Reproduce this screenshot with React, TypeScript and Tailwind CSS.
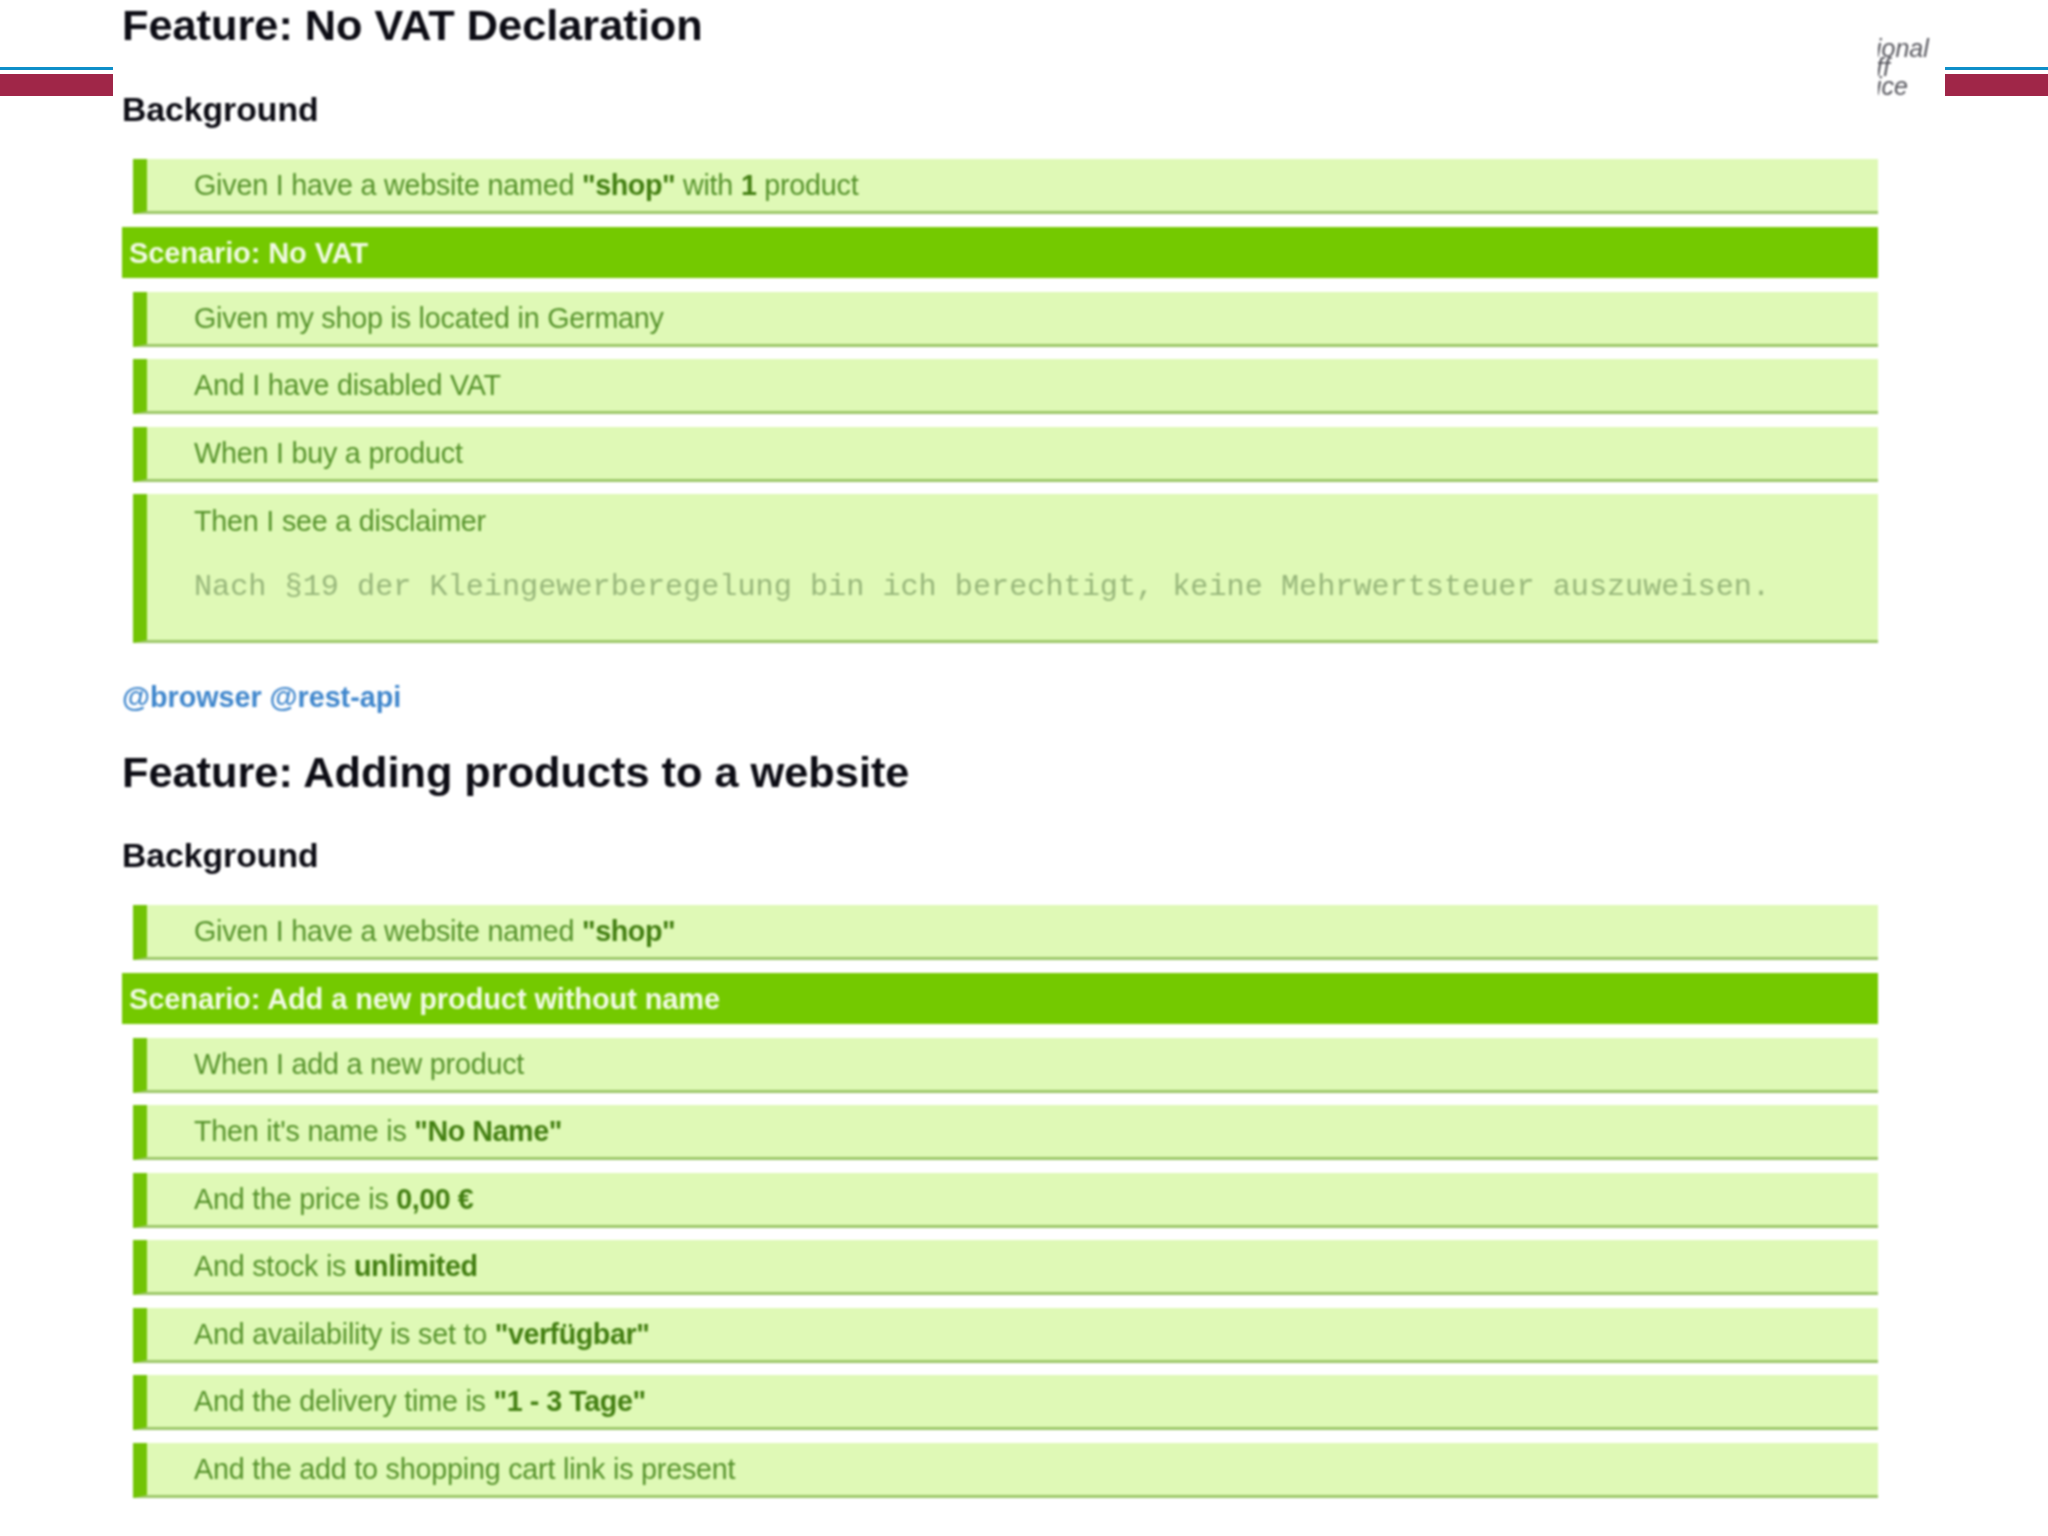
const Bold = ({ children }: { children: React.ReactNode }) => (
  <b className="text-[#437f12] tracking-[-0.45px]">{children}</b>
);

const firstSteps = [
  <>Given my shop is located in Germany</>,
  <>And I have disabled VAT</>,
  <>When I buy a product</>,
];

const secondSteps = [
  <>When I add a new product</>,
  <>Then it's name is <Bold>"No Name"</Bold></>,
  <>And the price is <Bold>0,00 €</Bold></>,
  <>And stock is <Bold>unlimited</Bold></>,
  <>And availability is set to <Bold>"verfügbar"</Bold></>,
  <>And the delivery time is <Bold>"1 - 3 Tage"</Bold></>,
  <>And the add to shopping cart link is present</>,
];

function Step({ children }: { children: React.ReactNode }) {
  return (
    <div className="ml-[11px] mb-[12.5px] h-[55px] flex items-center pl-[47px] pt-[2px] bg-[#dff9b6] border-l-[14px] border-l-[#72c405] border-b-[3px] border-b-[#9cc768] text-[28.7px] text-[#55922a] tracking-[-0.2px]">
      <span>{children}</span>
    </div>
  );
}

function Scenario({ title }: { title: string }) {
  return (
    <div className="mb-[14px] h-[51px] flex items-center pl-[7px] pt-[3px] bg-[#74c900] text-[29px] font-bold text-[#f1fbe4] tracking-[-0.1px]">
      Scenario: {title}
    </div>
  );
}

function Stripe() {
  return (
    <div className="pt-[67px]">
      <div className="h-[3px] bg-[#0f8fc9]" />
      <div className="mt-[4px] h-[22px] bg-[#a02648]" />
    </div>
  );
}

export default function App() {
  return (
    <div className="w-[2048px] h-[1536px] overflow-hidden bg-white flex font-['Liberation_Sans',sans-serif]">
      <div className="w-[113px] shrink-0">
        <Stripe />
      </div>

      <main className="w-[1765px] shrink-0 pl-[9px] blur-[0.9px]">
        <h1 className="h-[50px] text-[43.3px] leading-[50px] font-bold text-[#0c0c14]">
          Feature: No VAT Declaration
        </h1>
        <h2 className="mt-[39px] h-[40px] mb-[30px] text-[33.7px] leading-[40px] font-bold text-[#0c0c14]">
          Background
        </h2>
        <Step>
          Given I have a website named <Bold>"shop"</Bold> with <Bold>1</Bold> product
        </Step>
        <Scenario title="No VAT" />
        {firstSteps.map((s, i) => (
          <Step key={i}>{s}</Step>
        ))}
        <div className="ml-[11px] h-[149px] pl-[47px] pt-[10px] bg-[#dff9b6] border-l-[14px] border-l-[#72c405] border-b-[3px] border-b-[#9cc768]">
          <p className="text-[28.7px] leading-[34px] text-[#55922a] tracking-[-0.2px]">
            Then I see a disclaimer
          </p>
          <pre className="mt-[32px] text-[30.2px] leading-[34px] text-[#97b67a] font-['Liberation_Mono',monospace]">
            Nach §19 der Kleingewerberegelung bin ich berechtigt, keine Mehrwertsteuer auszuweisen.
          </pre>
        </div>

        <p className="mt-[37px] h-[34px] text-[28.7px] leading-[34px] font-bold text-[#3f86cc]">
          @browser @rest-api
        </p>
        <h1 className="mt-[33px] h-[50px] text-[43.3px] leading-[50px] font-bold text-[#0c0c14]">
          Feature: Adding products to a website
        </h1>
        <h2 className="mt-[38px] h-[40px] mb-[30px] text-[33.7px] leading-[40px] font-bold text-[#0c0c14]">
          Background
        </h2>
        <Step>
          Given I have a website named <Bold>"shop"</Bold>
        </Step>
        <Scenario title="Add a new product without name" />
        {secondSteps.map((s, i) => (
          <Step key={i}>{s}</Step>
        ))}
      </main>

      <div className="w-[54px] shrink-0 pt-[39px] overflow-hidden blur-[0.9px]">
        <div className="-ml-[2px] text-[25px] leading-[19px] italic text-[#55555c] whitespace-nowrap">
          <div>ional</div>
          <div>ff</div>
          <div>ice</div>
        </div>
      </div>
      <div className="w-[13px] shrink-0" />
      <div className="flex-1">
        <Stripe />
      </div>
    </div>
  );
}
